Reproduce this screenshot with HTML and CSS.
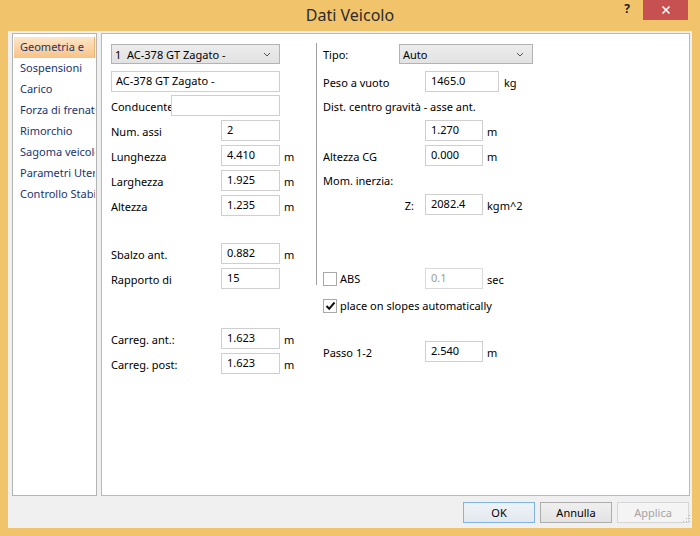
FILE: index.html
```html
<!DOCTYPE html>
<html lang="it">
<head>
  <meta charset="UTF-8">
  <title>Dati Veicolo</title>
  <link rel="stylesheet" href="styles.css">
</head>
<body>
  <div class="window">
    <div class="titlebar">
      <div></div>
      <div class="title">Dati Veicolo</div>
      <div class="caption">
        <span class="help">?</span>
        <span class="close">
          <svg width="10" height="10" viewBox="0 0 10 10"><path d="M1.5 1.5 L8.5 8.5 M8.5 1.5 L1.5 8.5" stroke="#fff" stroke-width="1.6"/></svg>
        </span>
      </div>
    </div>

    <div class="client">
      <div class="main">
        <ul class="nav">
          <li class="active">Geometria e</li>
          <li>Sospensioni</li>
          <li>Carico</li>
          <li>Forza di frenata</li>
          <li>Rimorchio</li>
          <li>Sagoma veicolo</li>
          <li>Parametri Utente</li>
          <li>Controllo Stabilità</li>
        </ul>

        <div class="panel">
          <div class="col col-left">
            <div class="combo combo-vehicle">
              <span>1&nbsp;&nbsp;AC-378 GT Zagato -</span>
              <svg width="8" height="5" viewBox="0 0 8 5"><path d="M1 1 L4 4 L7 1" fill="none" stroke="#555" stroke-width="1"/></svg>
            </div>
            <div class="field field-name">AC-378 GT Zagato -</div>
            <div class="row row-driver">
              <span class="lbl lbl-driver">Conducente</span>
              <div class="field field-driver"></div>
            </div>
            <div class="row"><span class="lbl">Num. assi</span><div class="field">2</div></div>
            <div class="row"><span class="lbl">Lunghezza</span><div class="field">4.410</div><span class="unit">m</span></div>
            <div class="row"><span class="lbl">Larghezza</span><div class="field">1.925</div><span class="unit">m</span></div>
            <div class="row"><span class="lbl">Altezza</span><div class="field">1.235</div><span class="unit">m</span></div>
            <div class="row spaced"><span class="lbl">Sbalzo ant.</span><div class="field">0.882</div><span class="unit">m</span></div>
            <div class="row"><span class="lbl">Rapporto di</span><div class="field">15</div></div>
            <div class="row spaced-lg"><span class="lbl">Carreg. ant.:</span><div class="field">1.623</div><span class="unit">m</span></div>
            <div class="row"><span class="lbl">Carreg. post:</span><div class="field">1.623</div><span class="unit">m</span></div>
          </div>

          <div class="sep"></div>

          <div class="col col-right">
            <div class="row row-combo">
              <span class="lbl lbl-type">Tipo:</span>
              <div class="combo combo-type">
                <span>Auto</span>
                <svg width="8" height="5" viewBox="0 0 8 5"><path d="M1 1 L4 4 L7 1" fill="none" stroke="#555" stroke-width="1"/></svg>
              </div>
            </div>
            <div class="row row-weight"><span class="lbl">Peso a vuoto</span><div class="field field-weight">1465.0</div><span class="unit unit-kg">kg</span></div>
            <div class="row row-text">Dist. centro gravità - asse ant.</div>
            <div class="row"><span class="lbl"></span><div class="field">1.270</div><span class="unit">m</span></div>
            <div class="row"><span class="lbl">Altezza CG</span><div class="field">0.000</div><span class="unit">m</span></div>
            <div class="row row-text">Mom. inerzia:</div>
            <div class="row"><span class="lbl lbl-z">Z:</span><div class="field">2082.4</div><span class="unit">kgm^2</span></div>
            <div class="row row-abs">
              <span class="lbl lbl-check"><span class="check"></span>ABS</span>
              <div class="field disabled">0.1</div><span class="unit">sec</span>
            </div>
            <div class="row row-slopes">
              <span class="check checked">
                <svg width="11" height="10" viewBox="0 0 11 10"><path d="M1.5 5 L4.2 7.8 L9.5 1.5" fill="none" stroke="#111" stroke-width="2"/></svg>
              </span>
              <span>place on slopes automatically</span>
            </div>
            <div class="row row-wheelbase"><span class="lbl">Passo 1-2</span><div class="field">2.540</div><span class="unit">m</span></div>
          </div>
        </div>
      </div>

      <div class="footer">
        <button class="btn btn-default">OK</button>
        <button class="btn">Annulla</button>
        <button class="btn" disabled>Applica</button>
      </div>

      <svg class="grip" width="8" height="10" viewBox="0 0 8 10">
        <rect x="6" y="0" width="1" height="1" fill="#b5b5b5"/>
        <rect x="6" y="3" width="1" height="1" fill="#b5b5b5"/>
        <rect x="3" y="3" width="1" height="1" fill="#b5b5b5"/>
        <rect x="6" y="6" width="1" height="1" fill="#b5b5b5"/>
        <rect x="3" y="6" width="1" height="1" fill="#b5b5b5"/>
        <rect x="0" y="6" width="1" height="1" fill="#b5b5b5"/>
      </svg>
    </div>
  </div>
</body>
</html>
```

FILE: styles.css
```css
body {
  margin: 0;
  font-family: "Noto Sans", "Open Sans", sans-serif;
  font-size: 11px;
  color: #000;
}

.window {
  width: 700px;
  height: 536px;
  background-color: #f1c46b;
  display: flex;
  flex-direction: column;
}

/* title bar */
.titlebar {
  height: 31px;
  display: grid;
  grid-template-columns: 1fr auto 1fr;
}

.titlebar .title {
  font-size: 16px;
  line-height: 30px;
  color: #2b2b2b;
}

.caption {
  display: flex;
  justify-content: flex-end;
  align-items: flex-start;
}

.caption .help {
  width: 32px;
  height: 20px;
  line-height: 18px;
  text-align: center;
  font-size: 12px;
  font-weight: bold;
  color: #222;
}

.caption .close {
  width: 45px;
  height: 20px;
  margin-right: 12px;
  background-color: #c75050;
  display: flex;
  justify-content: center;
  align-items: center;
}

/* client area */
.client {
  position: relative;
  flex: 1;
  margin: 0 8px 8px;
  background-color: #f0f0f0;
  padding: 2px 2px 0 4px;
  display: flex;
  flex-direction: column;
}

.main {
  height: 463px;
  display: flex;
  gap: 4px;
}

.nav {
  list-style: none;
  margin: 0;
  padding: 3px 0 0;
  width: 83px;
  background: #fff;
  border: 1px solid #b4b4b4;
}

.nav li {
  height: 21px;
  line-height: 20px;
  padding-left: 6px;
  margin: 0 1px;
  color: #1a3470;
  white-space: nowrap;
  overflow: hidden;
}

.nav li.active {
  background: linear-gradient(#fde6c8, #f8c286);
  box-shadow: inset -1px 0 0 #f0b26a;
}

.panel {
  flex: 1;
  background: #fff;
  border: 1px solid #b9b9b9;
  padding: 10px 0 0 9px;
  display: flex;
  align-items: flex-start;
}

.col {
  display: flex;
  flex-direction: column;
  gap: 4px;
}

.col-left {
  width: 205px;
}

.sep {
  width: 1px;
  height: 242px;
  margin-top: -1px;
  background-color: #a0a0a0;
}

.col-right {
  margin-left: 6px;
}

.row {
  display: flex;
  align-items: center;
  height: 21px;
}

.lbl {
  width: 110px;
  padding-top: 1px;
  white-space: nowrap;
  overflow: hidden;
}

.col-right .lbl {
  width: 102px;
}

.field {
  box-sizing: border-box;
  width: 59px;
  height: 21px;
  border: 1px solid #cfcfcf;
  padding: 1px 0 0 5px;
  line-height: 16px;
  background: #fff;
}

.col-right .field {
  width: 58px;
}

.field.disabled {
  color: #9c9c9c;
  border-color: #dadada;
}

.unit {
  margin-left: 4px;
  padding-top: 2px;
}

.combo {
  box-sizing: border-box;
  height: 20px;
  border: 1px solid #b3b3b3;
  background: linear-gradient(#ececec, #e2e2e2);
  display: flex;
  justify-content: space-between;
  align-items: center;
  padding: 0 8px 0 3px;
}

.combo-vehicle {
  width: 169px;
}

.field-name {
  width: 169px;
  margin-top: 3px;
  padding-left: 4px;
}

.row-driver {
  margin-top: -1px;
}

.lbl-driver {
  width: 60px;
}

.field-driver {
  width: 109px;
}

.spaced {
  margin-top: 23px;
}

.spaced-lg {
  margin-top: 35px;
}

/* right column */
.row-combo {
  height: 20px;
}

.col-right .lbl-type {
  width: 76px;
}

.combo-type {
  width: 134px;
}

.row-weight {
  margin-top: 3px;
}

.col-right .field-weight {
  width: 74px;
}

.unit-kg {
  margin-left: 5px;
}

.row-text {
  height: 20px;
}

.col-right .lbl-z {
  text-align: right;
  padding-right: 11px;
  box-sizing: border-box;
}

.row-abs {
  margin-top: 49px;
}

.col-right .lbl-check {
  display: flex;
  align-items: center;
  padding-top: 0;
}

.check {
  box-sizing: border-box;
  width: 14px;
  height: 14px;
  border: 1px solid #a9a9a9;
  background: #fff;
  margin-right: 3px;
  display: inline-flex;
  justify-content: center;
  align-items: center;
}

.row-slopes {
  margin-top: 2px;
}

.row-wheelbase {
  margin-top: 21px;
}

/* buttons */
.footer {
  height: 32px;
  display: flex;
  justify-content: flex-end;
  align-items: flex-start;
  gap: 5px;
  padding: 6px 1px 0 0;
  box-sizing: border-box;
}

.btn {
  width: 72px;
  height: 21px;
  font-family: inherit;
  font-size: 11px;
  color: #000;
  border: 1px solid #adadad;
  background: linear-gradient(#efefef, #e3e3e3);
  padding: 0;
}

.btn-default {
  border-color: #7eb4ea;
  background: linear-gradient(#eef3f8, #e3e8ee);
}

.btn:disabled {
  color: #a3a3a3;
  border-color: #d6d6d6;
  background: #f4f4f4;
}

.grip {
  position: absolute;
  right: 1px;
  bottom: 3px;
}
```
